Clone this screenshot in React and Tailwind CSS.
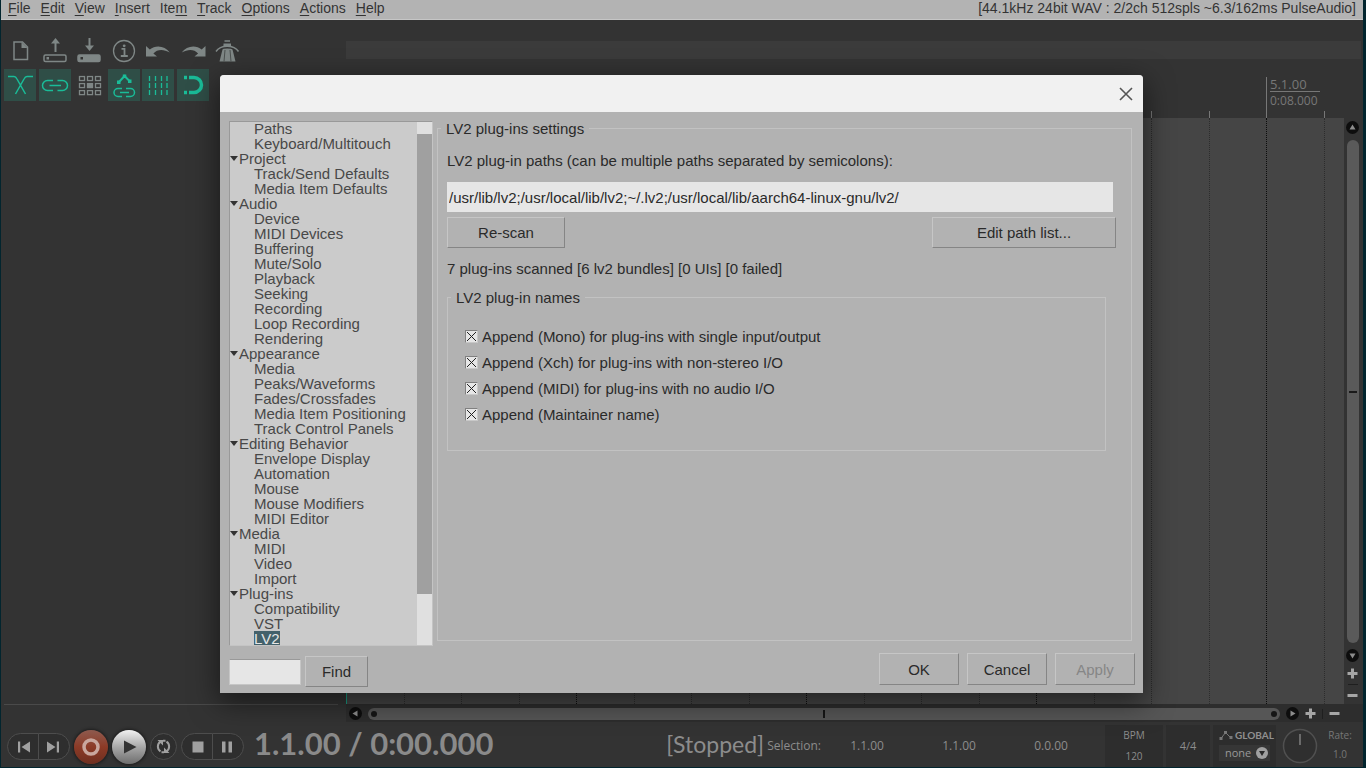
import React from "react";

const MENUS = [
  ["", "F", "ile"],
  ["", "E", "dit"],
  ["", "V", "iew"],
  ["", "I", "nsert"],
  ["Ite", "m", ""],
  ["", "T", "rack"],
  ["", "O", "ptions"],
  ["", "A", "ctions"],
  ["", "H", "elp"],
];

const TREE = [
  { items: ["Paths", "Keyboard/Multitouch"] },
  { title: "Project", items: ["Track/Send Defaults", "Media Item Defaults"] },
  {
    title: "Audio",
    items: ["Device", "MIDI Devices", "Buffering", "Mute/Solo", "Playback", "Seeking", "Recording", "Loop Recording", "Rendering"],
  },
  {
    title: "Appearance",
    items: ["Media", "Peaks/Waveforms", "Fades/Crossfades", "Media Item Positioning", "Track Control Panels"],
  },
  {
    title: "Editing Behavior",
    items: ["Envelope Display", "Automation", "Mouse", "Mouse Modifiers", "MIDI Editor"],
  },
  { title: "Media", items: ["MIDI", "Video", "Import"] },
  { title: "Plug-ins", items: ["Compatibility", "VST", "LV2"] },
];

const NAME_OPTIONS = [
  "Append (Mono) for plug-ins with single input/output",
  "Append (Xch) for plug-ins with non-stereo I/O",
  "Append (MIDI) for plug-ins with no audio I/O",
  "Append (Maintainer name)",
];

function Icon({ children }) {
  return (
    <svg viewBox="0 0 32 32" className="size-8" fill="none" stroke="currentColor" strokeWidth="1.5" aria-hidden="true">
      {children}
    </svg>
  );
}

const FILE_TOOLS = [
  {
    label: "New project",
    icon: (
      <Icon>
        <path d="M10 7h8.500l5 5v12.500H10z" />
        <path d="M17.500 7v6h6z" fill="currentColor" stroke="none" />
      </Icon>
    ),
  },
  {
    label: "Open project",
    icon: (
      <Icon>
        <rect x="5" y="20" width="22" height="6.500" rx="1.500" />
        <path d="M16.500 17V7" strokeWidth="2" />
        <path d="M12 8.500 16.500 3 21 8.500z" fill="currentColor" stroke="none" />
        <path d="M7.500 22h2.500v2.500H7.500z" fill="currentColor" stroke="none" />
      </Icon>
    ),
  },
  {
    label: "Save project",
    icon: (
      <Icon>
        <rect x="5" y="20" width="22" height="6.500" rx="1.500" fill="currentColor" />
        <path d="M16.500 3v9" strokeWidth="2" />
        <path d="M12 10.500h9L16.500 16z" fill="currentColor" stroke="none" />
        <path d="M7.500 22h2.500v2.500H7.500z" fill="#333" stroke="none" />
      </Icon>
    ),
  },
  {
    label: "Project settings",
    icon: (
      <Icon>
        <circle cx="16" cy="16" r="10.500" strokeWidth="1.300" />
        <path d="M13.500 13.800h3V21M12.800 21h7" strokeWidth="1.800" />
        <circle cx="16.200" cy="10.800" r="1.400" fill="currentColor" stroke="none" />
      </Icon>
    ),
  },
  {
    label: "Undo",
    icon: (
      <Icon>
        <path d="M4 11v10.500h11l-3.600-3c4-4.500 10-4.500 16.400-1C23 10.500 13.500 9.500 7.800 14.500z" fill="currentColor" stroke="none" />
      </Icon>
    ),
  },
  {
    label: "Redo",
    icon: (
      <Icon>
        <path d="M28.500 11v10.500h-11l3.600-3c-4-4.500-10-4.500-16.400-1C9.500 10.500 19 9.500 24.700 14.500z" fill="currentColor" stroke="none" />
      </Icon>
    ),
  },
  {
    label: "Metronome",
    icon: (
      <Icon>
        <path d="M12 12.500h9L24.500 26.500H8.500z" fill="currentColor" stroke="none" />
        <path d="M14 15l-1 11.500M19 15l1 11.500" stroke="#4a4f4e" strokeWidth="1" />
        <path d="M5 18C9.500 11 23 11 27.500 18" stroke="#333" strokeWidth="1.500" />
        <path d="M5 16.500C9.500 9.500 23 9.500 27.500 16.500" />
        <path d="M13.500 6h5.500" strokeWidth="1.500" />
        <path d="M12.500 8.500h7.500v2.500h-7.500z" fill="currentColor" stroke="none" />
      </Icon>
    ),
  },
];

const CELLS = [8, 16, 24];

const EDIT_TOOLS = [
  {
    label: "Auto-crossfade",
    active: true,
    icon: (
      <Icon>
        <path d="M4 7.500h6c1.500 0 2 .5 3 2.500L21.500 25M29 7.500h-6c-1.500 0-2 .5-3 2.500L11.500 25" />
      </Icon>
    ),
  },
  {
    label: "Item grouping",
    active: true,
    icon: (
      <Icon>
        <path d="M14 11.500H8.500a5 5 0 0 0 0 10H14M18.500 11.500h5a5 5 0 0 1 0 10h-5M10.500 16.500h11.500" />
      </Icon>
    ),
  },
  {
    label: "Ripple editing",
    active: false,
    icon: (
      <Icon>
        {CELLS.map((y) =>
          CELLS.map((x) => (
            <rect key={x + "-" + y} x={x - 1.5} y={y * 0.88 + 0.5} width="5" height="4" strokeWidth="1.300" fill={x === 16 && y === 16 ? "currentColor" : "none"} />
          ))
        )}
      </Icon>
    ),
  },
  {
    label: "Move envelopes",
    active: true,
    icon: (
      <Icon>
        <path d="M11 13l5.500-6L21.500 12" strokeWidth="2" />
        <path d="M9 11.500h3.500V15H9zM14.800 5.500h3.500V9h-3.500zM20 10.500h3.500V14H20z" fill="currentColor" stroke="none" />
        <path d="M14 19.500h-4a4 4 0 0 0 0 8h4M18 19.500h4.500a4 4 0 0 1 0 8H18M12 23.500h9" />
      </Icon>
    ),
  },
  {
    label: "Grid lines",
    active: true,
    icon: (
      <Icon>
        <path d="M7.500 7v19M13.500 7v19M19.500 7v19M25 7v19" strokeDasharray="5 2" strokeWidth="1.300" />
      </Icon>
    ),
  },
  {
    label: "Snapping",
    active: true,
    icon: (
      <Icon>
        <path d="M12 8.500h5a7.500 7.500 0 0 1 0 15h-5" strokeWidth="3.500" />
        <path d="M7 6.800h3v3.500H7zM7 21.800h3v3.500H7z" fill="currentColor" stroke="none" />
      </Icon>
    ),
  },
  {
    label: "Locking",
    active: false,
    icon: (
      <Icon>
        <path d="M10 15h14v10H10zM13 15v-4a4 4 0 0 1 8 0v4" />
      </Icon>
    ),
  },
];

function MenuBar() {
  return (
    <header className="flex h-5 items-start justify-between border-b border-[#c6c6c6] bg-[#b3b3b3] pr-[7px] pl-[7px] text-[14px] leading-4 text-[#333]">
      <nav className="flex gap-[10px]">
        {MENUS.map(([before, key, after]) => (
          <button key={before + key + after} type="button">
            {before}
            <span className="underline underline-offset-2">{key}</span>
            {after}
          </button>
        ))}
      </nav>
      <p>[44.1kHz 24bit WAV : 2/2ch 512spls ~6.3/162ms PulseAudio]</p>
    </header>
  );
}

function Toolbar() {
  return (
    <div className="grid w-[242px] grid-cols-7 gap-y-0.5 pt-[15px] text-[#7f8786]">
      {FILE_TOOLS.map((t) => (
        <button key={t.label} type="button" aria-label={t.label} className="size-8">
          {t.icon}
        </button>
      ))}
      {EDIT_TOOLS.map((t) => (
        <button
          key={t.label}
          type="button"
          aria-label={t.label}
          aria-pressed={t.active}
          className={t.active ? "size-8 bg-[#2f4e47] text-[#1abc98]" : "size-8"}
        >
          {t.icon}
        </button>
      ))}
    </div>
  );
}

const MEASURES = [1, 2, 3, 4, 5];

function Ruler() {
  return (
    <div className="flex h-[59px] overflow-hidden pt-[18px]">
      {MEASURES.map((m) => (
        <div key={m} className="grid w-[230px] shrink-0 grid-cols-4 items-end">
          <div className="h-full border-l border-[#777] pl-[3px] font-['Open_Sans',sans-serif] text-[#777]">
            <p className="w-[50px] border-b border-[#777] text-[13px] leading-[14px]">{m}.1.00</p>
            <p className="pt-[3px] text-[12px] leading-3 whitespace-nowrap">0:0{(m - 1) * 2}.000</p>
          </div>
          <div className="h-[7px] border-l border-[#777]" />
          <div className="h-[7px] border-l border-[#777]" />
          <div className="h-[7px] border-l border-[#777]" />
        </div>
      ))}
    </div>
  );
}

function ArrangeView() {
  return (
    <div className="flex min-h-0 flex-1 overflow-hidden bg-[#454545]">
      {MEASURES.map((m) => (
        <div key={m} className="grid w-[230px] shrink-0 grid-cols-4">
          <div className={m === 1 ? "border-l border-[#1a9c84]" : "border-l border-dotted border-[#0c0c0c]"} />
          <div className="border-l border-dotted border-[#2c2c2c]" />
          <div className="border-l border-dotted border-[#2c2c2c]" />
          <div className="border-l border-dotted border-[#2c2c2c]" />
        </div>
      ))}
    </div>
  );
}

const ARROWS = {
  up: "M6.500 3.500 9.500 8.500h-6z",
  down: "M6.500 9.500 3.500 4.500h6z",
  left: "M3.500 6.500 8.500 3.500v6z",
  right: "M9.500 6.500 4.500 3.500v6z",
};

function ScrollButton({ dir }) {
  return (
    <button type="button" aria-label={"Scroll " + dir} className="size-[13px] shrink-0 rounded-full bg-[#0d0d0d]">
      <svg viewBox="0 0 13 13" className="size-[13px]" aria-hidden="true">
        <path d={ARROWS[dir]} fill="#8c8c8c" />
      </svg>
    </button>
  );
}

function ZoomButton({ sign, label }) {
  return (
    <button type="button" aria-label={label} className="size-[11px] shrink-0">
      <svg viewBox="0 0 11 11" className="size-[11px]" stroke="#a6a6a6" strokeWidth="3" aria-hidden="true">
        <path d={sign === "+" ? "M.5 5.500h10M5.500 .5v10" : "M.5 5.500h10"} />
      </svg>
    </button>
  );
}

function VerticalScroll() {
  return (
    <div className="flex w-[19px] flex-col items-center bg-[#333] pt-[3px] pr-0.5 pb-[3px]">
      <ScrollButton dir="up" />
      <div className="mt-[6px] flex w-3 flex-1 items-center justify-center rounded-full bg-[#5a5a5a]">
        <div className="h-0.5 w-2 bg-[#1a1a1a]" />
      </div>
      <div className="mt-[6px] flex flex-col items-center">
        <ScrollButton dir="down" />
        <div className="flex flex-col items-center gap-[5px] pt-[6px]">
          <ZoomButton sign="+" label="Zoom in vertically" />
          <div className="h-px w-[10px] bg-[#1f1f1f]" />
          <ZoomButton sign="-" label="Zoom out vertically" />
        </div>
      </div>
    </div>
  );
}

function HorizontalScroll() {
  return (
    <div className="flex h-[18px] items-center bg-[#2d2d2d] pt-px pl-[3px]">
      <ScrollButton dir="left" />
      <div className="mx-[6px] flex h-3 flex-1 items-center justify-between rounded-full bg-[#565656] px-[3px]">
        <div className="size-[6px] rounded-full bg-[#161616]" />
        <div className="h-2 w-0.5 bg-[#161616]" />
        <div className="size-[6px] rounded-full bg-[#161616]" />
      </div>
      <div className="flex items-center gap-[6px] pr-[23px]">
        <ScrollButton dir="right" />
        <ZoomButton sign="+" label="Zoom in horizontally" />
        <div className="h-[10px] w-px bg-[#1f1f1f]" />
        <ZoomButton sign="-" label="Zoom out horizontally" />
      </div>
    </div>
  );
}

function PillButton({ label, side, children }) {
  return (
    <button
      type="button"
      aria-label={label}
      className={
        side === "left"
          ? "flex h-[27px] w-8 items-center justify-center rounded-l-full border border-[#4d4d4d] bg-[#2e2e2e] pl-0.5"
          : "-ml-px flex h-[27px] w-8 items-center justify-center rounded-r-full border border-[#4d4d4d] bg-[#2e2e2e] pr-0.5"
      }
    >
      <svg viewBox="0 0 14 14" className="size-[14px]" fill="#a0a0a0" aria-hidden="true">
        {children}
      </svg>
    </button>
  );
}

function TransportButtons() {
  return (
    <div className="flex items-center pt-px pl-[6px]">
      <PillButton label="Go to start" side="left">
        <path d="M1 1.500h2.200v11H1zM13 1.500v11L4.500 7z" />
      </PillButton>
      <PillButton label="Go to end" side="right">
        <path d="M10.800 1.500H13v11h-2.200zM1 1.500v11L9.500 7z" />
      </PillButton>
      <button type="button" aria-label="Record" className="ml-1 size-[34px] rounded-full bg-linear-to-b from-[#8e5a4e] via-[#8c3a26] to-[#6e2f20] shadow-[0_0_3px_1px_#1c1c1c]">
        <svg viewBox="0 0 34 34" className="size-[34px]" aria-hidden="true">
          <circle cx="17" cy="17" r="7" fill="none" stroke="#c9a79e" strokeWidth="3.500" />
        </svg>
      </button>
      <button type="button" aria-label="Play" className="ml-1 size-[34px] rounded-full bg-linear-to-b from-[#f2f2f2] via-[#a8a8a8] to-[#6e6e6e] shadow-[0_0_3px_1px_#1c1c1c]">
        <svg viewBox="0 0 34 34" className="size-[34px]" aria-hidden="true">
          <path d="M12 10.500v13L24.500 17z" fill="#333" />
        </svg>
      </button>
      <button type="button" aria-label="Toggle repeat" className="ml-1 size-[27px] rounded-full border border-[#4d4d4d] bg-[#2e2e2e]">
        <svg viewBox="0 0 25 25" className="size-[25px]" fill="none" stroke="#a0a0a0" strokeWidth="2" aria-hidden="true">
          <path d="M9.500 17.300A5.700 5.700 0 0 1 9.500 7.700M15.500 7.700a5.700 5.700 0 0 1 0 9.600" />
          <path d="M6.500 6h5.500v5.500zM18.500 19H13v-5.500z" fill="#a0a0a0" stroke="none" />
          <path d="M12 6.800h2.500M10.500 18.200H13" />
        </svg>
      </button>
      <div className="ml-1 flex">
        <PillButton label="Stop" side="left">
          <path d="M1.500 1.500h11v11h-11z" />
        </PillButton>
        <PillButton label="Pause" side="right">
          <path d="M2 1.500h3.500v11H2zM8.500 1.500H12v11H8.500z" />
        </PillButton>
      </div>
    </div>
  );
}

function Transport() {
  return (
    <footer className="flex h-[45px] items-stretch bg-[#333] pt-[3px] font-['Open_Sans',sans-serif] text-[12px] text-[#8c8c8c]">
      <TransportButtons />
      <div className="flex flex-1 items-center justify-between pb-[6px] pl-[10px] font-[Lato,sans-serif] whitespace-nowrap">
        <p className="text-[31px] leading-9 font-bold text-[#8a8a8a]">1.1.00 / 0:00.000</p>
        <p className="pt-px text-[23px] leading-6">[Stopped]</p>
      </div>
      <div className="flex items-center pr-1 pl-[3px]">
        <span>Selection:</span>
        <div className="flex">
          <input aria-label="Selection start" defaultValue="1.1.00" className="w-[92px] bg-transparent text-center" />
          <input aria-label="Selection end" defaultValue="1.1.00" className="w-[92px] bg-transparent text-center" />
          <input aria-label="Selection length" defaultValue="0.0.00" className="w-[92px] bg-transparent text-center" />
        </div>
      </div>
      <div className="flex gap-[3px] pl-1 text-[10px]">
        <label className="flex w-[58px] flex-col items-center justify-between bg-[#2d2d2d] pt-[3px] pb-1 leading-[14px]">
          BPM
          <input defaultValue="120" className="w-full bg-transparent text-center" />
        </label>
        <button type="button" className="w-[44px] bg-[#2d2d2d] text-[11px]">
          4/4
        </button>
        <div className="flex w-[63px] flex-col justify-between bg-[#2d2d2d] px-[6px] pt-[3px] pb-[6px]">
          <button type="button" className="flex items-center gap-0.5 text-[10px] leading-[14px] font-bold text-[#909090]">
            <svg viewBox="0 0 14 12" className="h-3 w-[14px] shrink-0" fill="none" stroke="#777" aria-hidden="true">
              <path d="M2 9.500 6.500 3.500l5 5" />
              <path d="M.5 8h3v3h-3zM5 2h3v3H5zM10.500 7h3v3h-3z" fill="#777" stroke="none" />
            </svg>
            <span className="font-[Lato,sans-serif]">GLOBAL</span>
          </button>
          <div className="grid items-center bg-[#363636]">
            <select aria-label="Global automation override" className="col-start-1 row-start-1 h-4 appearance-none bg-transparent pl-[6px] text-[11px] leading-4 text-[#999]">
              <option>none</option>
            </select>
            <svg viewBox="0 0 12 12" className="pointer-events-none col-start-1 row-start-1 mr-0.5 size-3 justify-self-end" aria-hidden="true">
              <circle cx="6" cy="6" r="6" fill="#a0a0a0" />
              <path d="M3 4h6L6 9z" fill="#2a2a2a" />
            </svg>
          </div>
        </div>
      </div>
      <label className="flex w-[47px] items-center justify-center">
        <input type="range" aria-label="Play rate" className="sr-only" />
        <svg viewBox="0 0 36 36" className="size-9" aria-hidden="true">
          <circle cx="18" cy="18" r="16.500" fill="#2f2f2f" stroke="#505050" strokeWidth="1.500" />
          <path d="M18 6v11" stroke="#8c8c8c" strokeWidth="1.300" />
        </svg>
      </label>
      <label className="mr-[6px] flex w-[34px] flex-col items-center justify-between pt-[3px] pb-[6px] text-[10px] leading-[14px] text-[#777]">
        Rate:
        <input defaultValue="1.0" className="w-full bg-transparent text-center" />
      </label>
    </footer>
  );
}

function PushButton({ className, children, ...rest }) {
  return (
    <button
      type="button"
      className={"border border-t-[#c6c6c6] border-r-[#858585] border-b-[#858585] border-l-[#c6c6c6] bg-[#b2b2b2] " + className}
      {...rest}
    >
      {children}
    </button>
  );
}

function PreferenceTree() {
  return (
    <div className="flex h-[525px] w-[204px] shrink-0 overflow-hidden border border-[#c4c4c4] border-t-[#999] border-l-[#999] bg-[#cbcbcb] leading-[15px] text-[#484848]">
      <ul className="-mt-px min-w-0 flex-1">
        {TREE.map((group, i) => (
          <li key={i}>
            {group.title && (
              <button type="button" className="flex items-center gap-px text-left">
                <svg viewBox="0 0 8 5" className="h-[5px] w-2" aria-hidden="true">
                  <path d="M0 0h8L4 5z" fill="#333" />
                </svg>
                {group.title}
              </button>
            )}
            <ul className="pl-6">
              {group.items.map((item) => (
                <li key={item} className="flex">
                  <button
                    type="button"
                    className={item === "LV2" ? "bg-[#43616b] text-left text-[#e6e6e6]" : "text-left whitespace-nowrap"}
                  >
                    {item}
                  </button>
                </li>
              ))}
            </ul>
          </li>
        ))}
      </ul>
      <div className="w-[15px] bg-[#e0e0e0] pt-3 pb-[51px]">
        <div className="h-full bg-[#a0a0a0]" />
      </div>
    </div>
  );
}

function CheckOption({ children }) {
  return (
    <label className="flex h-[26px] items-center gap-1">
      <span className="grid">
        <input
          type="checkbox"
          defaultChecked
          className="peer col-start-1 row-start-1 size-[13px] appearance-none border border-[#c8c8c8] border-t-[#808080] border-l-[#808080] bg-[#e6e6e6]"
        />
        <svg
          viewBox="0 0 13 13"
          className="pointer-events-none invisible col-start-1 row-start-1 size-[13px] peer-checked:visible"
          stroke="#222"
          aria-hidden="true"
        >
          <path d="M2 2l9 9M11 2l-9 9" />
        </svg>
      </span>
      {children}
    </label>
  );
}

function PreferencesDialog() {
  return (
    <section
      role="dialog"
      aria-label="Preferences"
      className="flex w-[923px] flex-col overflow-hidden rounded-t-sm bg-[#b2b2b2] text-[15px] leading-[17px] text-[#2a2a2a] shadow-[0_8px_28px_2px_rgba(0,0,0,0.5)]"
    >
      <div className="flex h-[37px] items-center justify-end bg-[#f1f1f1] pr-[10px]">
        <button type="button" aria-label="Close" className="size-[14px]">
          <svg viewBox="0 0 14 14" className="size-[14px]" stroke="#555" strokeWidth="1.600" aria-hidden="true">
            <path d="M1 1l12 12M13 1 1 13" />
          </svg>
        </button>
      </div>
      <div className="flex gap-1 pt-2 pr-[11px] pl-[9px]">
        <div className="flex pt-px">
          <PreferenceTree />
        </div>
        <fieldset className="mb-[5px] min-w-0 flex-1 border border-[#c2c2c2] pr-[15px] pl-[9px]">
          <legend className="-ml-[6px] px-[5px]">LV2 plug-ins settings</legend>
          <div className="flex flex-col pt-[15px]">
            <label htmlFor="lv2-paths">LV2 plug-in paths (can be multiple paths separated by semicolons):</label>
            <div className="flex pt-[13px] pr-[3px]">
              <input
                id="lv2-paths"
                defaultValue="/usr/lib/lv2;/usr/local/lib/lv2;~/.lv2;/usr/local/lib/aarch64-linux-gnu/lv2/"
                className="h-[30px] flex-1 bg-[#e6e6e6] pl-0.5"
              />
            </div>
            <div className="flex justify-between pt-[5px]">
              <PushButton className="h-[31px] w-[118px]">Re-scan</PushButton>
              <PushButton className="h-[31px] w-[184px]">Edit path list...</PushButton>
            </div>
            <p className="pt-3">7 plug-ins scanned [6 lv2 bundles] [0 UIs] [0 failed]</p>
            <fieldset className="mt-3 mr-[10px] border border-[#c2c2c2] px-[17px] pb-[23px]">
              <legend className="-ml-[14px] px-[5px]">LV2 plug-in names</legend>
              <div className="pt-[17px]">
                {NAME_OPTIONS.map((o) => (
                  <CheckOption key={o}>{o}</CheckOption>
                ))}
              </div>
            </fieldset>
          </div>
        </fieldset>
      </div>
      <div className="flex items-start justify-between pt-[7px] pr-2 pb-[6px] pl-[9px]">
        <div className="flex items-center gap-1 pt-[3px]">
          <input aria-label="Find in preferences" className="h-[26px] w-[72px] border border-[#c6c6c6] border-t-[#999] bg-[#e6e6e6] px-1" />
          <PushButton className="h-[31px] w-[63px]">Find</PushButton>
        </div>
        <div className="flex gap-2">
          <PushButton className="h-8 w-20">OK</PushButton>
          <PushButton className="h-8 w-20">Cancel</PushButton>
          <PushButton className="h-8 w-20 text-[#868686]" disabled>
            Apply
          </PushButton>
        </div>
      </div>
    </section>
  );
}

export default function App() {
  return (
    <div className="relative flex h-screen flex-col overflow-hidden bg-[#02252e] pr-[3px] pb-px pl-px font-['Liberation_Sans',Arial,sans-serif]">
      <MenuBar />
      <main className="flex min-h-0 flex-1 bg-[#333]">
        <aside className="flex w-[345px] shrink-0 flex-col justify-between pb-[17px] pl-[3px]">
          <Toolbar />
          <div className="mr-2 border-b border-[#4a4a4a]" />
        </aside>
        <div className="flex min-w-0 flex-1 flex-col">
          <div className="pt-[21px] pr-0.5">
            <div className="h-[18px] bg-[#3b3b3b]" />
          </div>
          <div className="pr-[19px]">
            <Ruler />
          </div>
          <div className="flex min-h-0 flex-1">
            <ArrangeView />
            <VerticalScroll />
          </div>
          <HorizontalScroll />
        </div>
      </main>
      <Transport />
      <div className="absolute inset-0 flex items-center justify-center pr-[3px]">
        <PreferencesDialog />
      </div>
    </div>
  );
}
